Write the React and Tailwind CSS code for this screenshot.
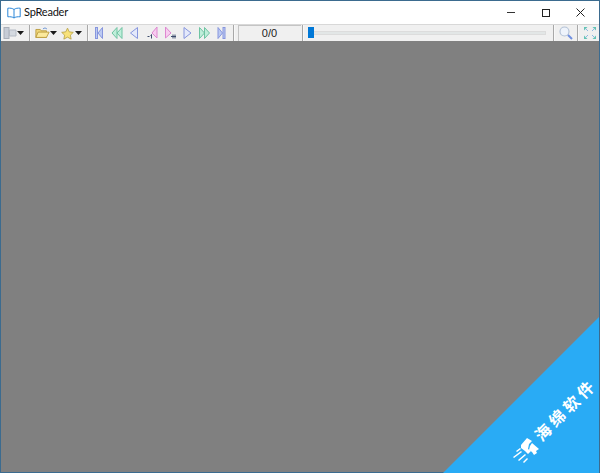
import React from 'react';

const Sep = ({ className = '' }) => <div className={`w-[2px] h-[16px] border-l border-[#a8a8a8] bg-[#f8f8f8] shrink-0 ${className}`} />;

const Caret = ({ className = '' }) => (
  <svg width="7" height="4" viewBox="0 0 7 4" className={`shrink-0 ${className}`}><path d="M0 0h7L3.500 4z" fill="#1a1a1a" /></svg>
);

// 16px toolbar glyphs
const Glyph = ({ children }) => (
  <svg width="16" height="16" viewBox="0 0 16 16" className="shrink-0" fill="none">{children}</svg>
);

const BLUE = { fill: '#bccaf2', stroke: '#8796de' };
const GREEN = { fill: '#bfeeda', stroke: '#6fc4a2' };
const PINK = { fill: '#f7cdf0', stroke: '#de88d0' };

const First = () => (
  <Glyph>
    <rect x="4.500" y="2.500" width="2" height="11" fill={BLUE.fill} stroke={BLUE.stroke} />
    <path d="M11.500 2.500v11L7 8z" fill={BLUE.fill} stroke={BLUE.stroke} />
  </Glyph>
);
const Last = () => (
  <Glyph>
    <path d="M4 2.500v11L8.500 8z" fill={BLUE.fill} stroke={BLUE.stroke} />
    <rect x="9" y="2.500" width="2" height="11" fill={BLUE.fill} stroke={BLUE.stroke} />
  </Glyph>
);
const PrevFast = () => (
  <Glyph>
    <path d="M8 2.500v11L3 8z" fill={GREEN.fill} stroke={GREEN.stroke} />
    <path d="M13 2.500v11L8 8z" fill={GREEN.fill} stroke={GREEN.stroke} />
  </Glyph>
);
const NextFast = () => (
  <Glyph>
    <path d="M3.500 2.500v11L8.500 8z" fill={GREEN.fill} stroke={GREEN.stroke} />
    <path d="M8.500 2.500v11L13.500 8z" fill={GREEN.fill} stroke={GREEN.stroke} />
  </Glyph>
);
const Prev = () => (
  <Glyph><path d="M11.500 2.500v11L4.500 8z" fill="#e4e9fb" stroke={BLUE.stroke} /></Glyph>
);
const Next = () => (
  <Glyph><path d="M5 2.500v11L12 8z" fill="#e4e9fb" stroke={BLUE.stroke} /></Glyph>
);
const PrevMark = () => (
  <Glyph>
    <path d="M13 2v11L8 8z" fill={PINK.fill} stroke={PINK.stroke} />
    <path d="M3.500 11.500h2M7.500 9.500v4M7.500 9.500l-1 1" stroke="#3c4c6c" strokeWidth="1" />
  </Glyph>
);
const NextMark = () => (
  <Glyph>
    <path d="M4.500 2v11L10 8z" fill={PINK.fill} stroke={PINK.stroke} />
    <path d="M10 11.500h5M12 9.500v4M14 9.500v4" stroke="#3c4c6c" strokeWidth="1" />
  </Glyph>
);

export default function App() {
  return (
    <div className="relative w-[600px] h-[473px] overflow-hidden flex flex-col bg-white border-x border-t border-[#3b6b8f] font-['Liberation_Sans',sans-serif]">
      {/* title bar */}
      <div className="h-[23px] shrink-0 flex items-center bg-white">
        <svg width="14" height="12" viewBox="0 0 14 12" fill="none" className="ml-[6px]">
          <path d="M7 2.500C5.500 1.200 3 1 .8 1.200v8.600C3 9.600 5.500 9.800 7 11c1.500-1.200 4-1.400 6.200-1.200V1.200C11 1 8.500 1.200 7 2.500zM7 2.500V11" stroke="#2a86d8" strokeWidth="1" />
        </svg>
        <span className="ml-[3px] text-[11px] tracking-[-0.2px] text-[#111] font-['Lato',sans-serif]">SpReader</span>
        <div className="ml-auto flex items-center">
          <div className="w-[35px] flex justify-center"><div className="w-[8px] h-px bg-[#333]" /></div>
          <div className="w-[35px] flex justify-center"><div className="w-[8px] h-[8px] border border-[#222]" /></div>
          <svg width="36" height="10" viewBox="0 0 36 10"><path d="M13.500.5l8 8M21.500.5l-8 8" stroke="#222" strokeWidth="1" fill="none" /></svg>
        </div>
      </div>

      {/* toolbar */}
      <div className="h-[17px] shrink-0 flex items-center bg-[#f0f0f0] border-t border-[#d8d8d8]">
        <svg width="14" height="14" viewBox="0 0 14 14" className="ml-[2px] shrink-0">
          <rect x="1" y="1.500" width="5" height="11" fill="#c6ccd6" stroke="#a8aeb8" />
          <path d="M6.500 4H13v6H6.500z" fill="#d4d9e0" stroke="#b4bac4" />
        </svg>
        <Caret />
        <Sep className="ml-[5px]" />
        <svg width="15" height="14" viewBox="0 0 17 14" className="ml-[4px] shrink-0">
          <path d="M1 3h5l1 1.500h6V12H1z" fill="#f0d678" stroke="#b89a3c" />
          <path d="M1 12l2.500-6H16l-3 6z" fill="#fbe99c" stroke="#b89a3c" />
          <path d="M9 2.500c1.500-1.500 3-1.500 4.500 0" stroke="#5a8ad0" fill="none" />
        </svg>
        <Caret />
        <svg width="13" height="13" viewBox="0 0 15 14" className="ml-[4px] shrink-0">
          <path d="M7.500.8l2 4.300 4.700.6-3.400 3.200.9 4.600-4.200-2.300-4.200 2.300.9-4.600L.8 5.700l4.700-.6z" fill="#f8e27a" stroke="#b9a54a" />
        </svg>
        <Caret className="ml-[1px]" />
        <Sep className="ml-[5px]" />
        <div className="flex items-center gap-[1.5px] ml-[2px]">
          <First />
          <PrevFast />
          <Prev />
          <PrevMark />
          <NextMark />
          <Next />
          <NextFast />
          <Last />
        </div>
        <Sep className="ml-[3px]" />
        <div className="ml-[3px] w-[63px] h-[16px] flex items-center justify-center bg-[#f0f0f0] border-l border-t border-[#c4c4c4] text-[11px] text-[#222]">0/0</div>
        <Sep className="ml-[1px]" />
        <div className="ml-[4px] w-[238px] flex items-center relative">
          <div className="w-full h-[4px] bg-[#e2e6e6] border border-[#dcdcdc]" />
          <div className="absolute left-0 top-[-4px] w-[6px] h-[11px] bg-[#0078d7]" />
        </div>
        <Sep className="ml-[7px]" />
        <svg width="16" height="16" viewBox="0 0 16 16" fill="none" className="ml-[3px] shrink-0">
          <circle cx="6.500" cy="6.500" r="4.500" fill="#eef3fb" stroke="#b4c2d6" strokeWidth="1.200" />
          <path d="M10 10l4 4" stroke="#6f8fe0" strokeWidth="2" />
        </svg>
        <Sep className="ml-[3px]" />
        <svg width="16" height="16" viewBox="0 0 16 16" fill="none" className="ml-[3px] shrink-0">
          <path d="M2 5.500V2h3.500zM14 5.500V2h-3.500zM2 10.500V14h3.500zM14 10.500V14h-3.500z" fill="#62c4b4" />
          <path d="M3.500 3.500l2.500 2.500M12.500 3.500L10 6M3.500 12.500L6 10M12.500 12.500L10 10" stroke="#8fb8e0" strokeWidth="1" />
        </svg>
      </div>

      {/* empty page area */}
      <div className="flex-1 bg-[#808080]" />
      <div className="h-px bg-[#3b6b8f] shrink-0" />

      {/* corner watermark */}
      <div className="absolute right-[-1px] bottom-0 w-[157px] h-[157px] bg-[#29abf5] [clip-path:polygon(100%_0,100%_100%,0_100%)]" />
      <div className="absolute left-[524px] top-[400px] w-[80px] text-white text-[16px] font-bold leading-none tracking-[4px] whitespace-nowrap rotate-[-45deg] font-['Noto_Sans_CJK_SC',sans-serif]">海绵软件</div>
      <svg width="28" height="27" viewBox="0 0 28 27" className="absolute left-[511px] top-[436px]" fill="white">
        <path d="M9 8l6-7 5 3-3 3-1 5 3 2-3 3-3-3-4-3z" />
        <path d="M18 9l2-3 7 6-3 2 1 2-3 2-2-3-3-2z" />
        <path d="M4 14l4-3 1 1-4 3zM1 20l8-6 1 1-8 6zM6 23l7-6 1 1-7 6zM11 25l4-4 1 1-4 4z" />
      </svg>
    </div>
  );
}
